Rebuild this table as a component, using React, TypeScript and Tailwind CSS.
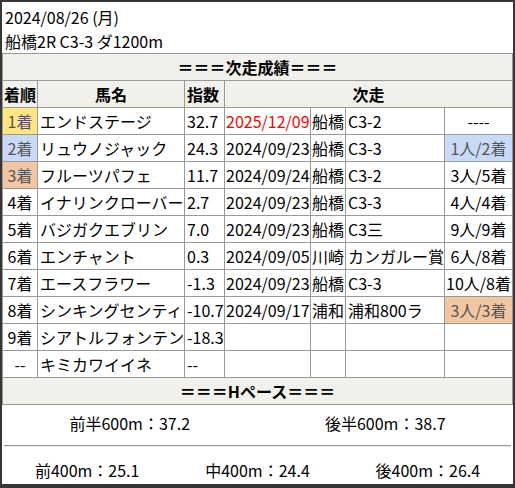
import React from 'react';

type Row = {
    rank: string;
    rankBg?: string;
    name: string;
    idx: string;
    date: string;
    red?: boolean;
    venue: string;
    race: string;
    res: string;
    resBg?: string;
};

const rows: Row[] = [
    { rank: '1着', rankBg: 'bg-[#ffe680] text-[#555]', name: 'エンドステージ', idx: '32.7', date: '2025/12/09', red: true, venue: '船橋', race: 'C3-2', res: '----' },
    { rank: '2着', rankBg: 'bg-[#c9daf8] text-[#555]', name: 'リュウノジャック', idx: '24.3', date: '2024/09/23', venue: '船橋', race: 'C3-3', res: '1人/2着', resBg: 'bg-[#c9daf8] text-[#555]' },
    { rank: '3着', rankBg: 'bg-[#f1c6a0] text-[#555]', name: 'フルーツパフェ', idx: '11.7', date: '2024/09/24', venue: '船橋', race: 'C3-2', res: '3人/5着' },
    { rank: '4着', name: 'イナリンクローバー', idx: '2.7', date: '2024/09/23', venue: '船橋', race: 'C3-3', res: '4人/4着' },
    { rank: '5着', name: 'バジガクエブリン', idx: '7.0', date: '2024/09/23', venue: '船橋', race: 'C3三', res: '9人/9着' },
    { rank: '6着', name: 'エンチャント', idx: '0.3', date: '2024/09/05', venue: '川崎', race: 'カンガルー賞', res: '6人/8着' },
    { rank: '7着', name: 'エースフラワー', idx: '-1.3', date: '2024/09/23', venue: '船橋', race: 'C3-3', res: '10人/8着' },
    { rank: '8着', name: 'シンキングセンティ', idx: '-10.7', date: '2024/09/17', venue: '浦和', race: '浦和800ラ', res: '3人/3着', resBg: 'bg-[#f1c6a0] text-[#555]' },
    { rank: '9着', name: 'シアトルフォンテン', idx: '-18.3', date: '', venue: '', race: '', res: '' },
    { rank: '--', name: 'キミカワイイネ', idx: '--', date: '', venue: '', race: '', res: '' },
];

const cell = 'h-[26px] leading-[26px] whitespace-nowrap overflow-hidden';

export default function App() {
    return (
        <div className="w-[515px] h-[488px] bg-white border-[#363636] border-t-2 border-l-2 border-r-2 border-b-4 text-black text-[16px] font-['Noto_Sans_CJK_JP','Noto_Sans',sans-serif]">
            <div className="h-[51px] pt-[3px] pl-[3px] leading-6">
                <div>2024/08/26 (月)</div>
                <div>船橋2R C3-3 ダ1200m</div>
            </div>

            <div className="grid grid-cols-[34px_146px_39px_85px_34px_98px_67px] gap-px bg-[#999] border border-[#999]">
                <div className={`${cell} col-span-7 bg-[#f2f0eb] text-center font-bold`}>＝＝＝次走成績＝＝＝</div>

                <div className={`${cell} bg-[#f2f0eb] text-center font-bold`}>着順</div>
                <div className={`${cell} bg-[#f2f0eb] text-center font-bold`}>馬名</div>
                <div className={`${cell} bg-[#f2f0eb] pl-[2px] font-bold`}>指数</div>
                <div className={`${cell} col-span-4 bg-[#f2f0eb] text-center font-bold`}>次走</div>

                {rows.map((r, i) => (
                    <React.Fragment key={i}>
                        <div className={`${cell} text-center ${r.rankBg ?? 'bg-white'}`}>{r.rank}</div>
                        <div className={`${cell} bg-white pl-[2px]`}>{r.name}</div>
                        <div className={`${cell} bg-white pl-[2px]`}>{r.idx}</div>
                        <div className={`${cell} bg-white pl-px ${r.red ? 'text-[#ff0000]' : ''}`}>{r.date}</div>
                        <div className={`${cell} bg-white pl-px`}>{r.venue}</div>
                        <div className={`${cell} bg-white pl-[2px]`}>{r.race}</div>
                        <div className={`${cell} text-center ${r.resBg ?? 'bg-white'}`}>{r.res}</div>
                    </React.Fragment>
                ))}

                <div className={`${cell} col-span-7 bg-[#f2f0eb] text-center font-bold`}>＝＝＝Hペース＝＝＝</div>
            </div>

            <div className="h-[40px] pt-[6px] leading-6 grid grid-cols-2 text-center">
                <div>前半600m：37.2</div>
                <div>後半600m：38.7</div>
            </div>
            <div className="mx-[2px] border-t border-b border-t-[#9a9a9a] border-b-[#e6e6e6]" />
            <div className="pt-[11px] leading-6 grid grid-cols-3 text-center">
                <div>前400m：25.1</div>
                <div>中400m：24.4</div>
                <div>後400m：26.4</div>
            </div>
        </div>
    );
}
